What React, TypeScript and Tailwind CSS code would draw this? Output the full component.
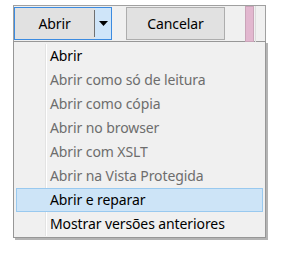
import * as React from "react";

interface MenuItem {
  label: string;
  disabled?: boolean;
  active?: boolean;
}

const items: MenuItem[] = [
  { label: "Abrir" },
  { label: "Abrir como só de leitura", disabled: true },
  { label: "Abrir como cópia", disabled: true },
  { label: "Abrir no browser", disabled: true },
  { label: "Abrir com XSLT", disabled: true },
  { label: "Abrir na Vista Protegida", disabled: true },
  { label: "Abrir e reparar", active: true },
  { label: "Mostrar versões anteriores" },
];

function SplitButton() {
  return (
    <div className="flex h-[33px] w-[98px] border border-[#3c8be0] bg-[#e1e1e1]">
      <div className="flex flex-1 items-center justify-center">Abrir</div>
      <div className="my-[2px] w-px bg-[#707070]" />
      <div className="flex w-[16px] items-center justify-center bg-[#cfe5f9]">
        <svg width="9" height="5" viewBox="0 0 9 5">
          <path d="M0 0h9L4.5 5z" fill="#000" />
        </svg>
      </div>
    </div>
  );
}

export default function App() {
  return (
    <div
      className="h-[254px] w-[292px] bg-white pl-[13px] pt-[5px] text-[14px] leading-none tracking-[-0.1px] text-black"
      style={{ fontFamily: '"Noto Sans", "Open Sans", sans-serif' }}
    >
      <div className="w-[253px]">
        <div className="flex h-[36px] border-x border-t border-[#a0a0a0] bg-[#f0f0f0] pt-px">
          <SplitButton />
          <div className="ml-[14px] flex h-[33px] w-[99px] items-center justify-center border border-[#adadad] bg-[#e1e1e1]">
            Cancelar
          </div>
          <div className="ml-[20px] -mt-px h-[36px] w-[9px] border border-[#c9a4b8] bg-[#e2b7cf]" />
          <div className="ml-px -mt-px h-[36px] w-px bg-[#dcdcdc]" />
        </div>
        <div className="border border-[#979797] bg-[#f0f0f0] px-[2px] pt-[2px] pb-px shadow-[2px_2px_0_#b4b4b4]">
          <div className="relative">
            <div className="absolute top-0 bottom-0 left-[29px] w-px bg-[#e3e3e3]" />
            <div className="absolute top-0 bottom-0 left-[30px] w-px bg-white" />
            {items.map((item) => (
              <div
                key={item.label}
                className={
                  item.active
                    ? "relative flex h-[24px] items-center border border-[#99c9ef] bg-[#cde4f7] pl-[33px]"
                    : "relative flex h-[24px] items-center border border-transparent pl-[33px]"
                }
              >
                <span className={item.disabled ? "text-[#6d6d6d]" : "text-black"}>{item.label}</span>
              </div>
            ))}
          </div>
        </div>
      </div>
    </div>
  );
}
